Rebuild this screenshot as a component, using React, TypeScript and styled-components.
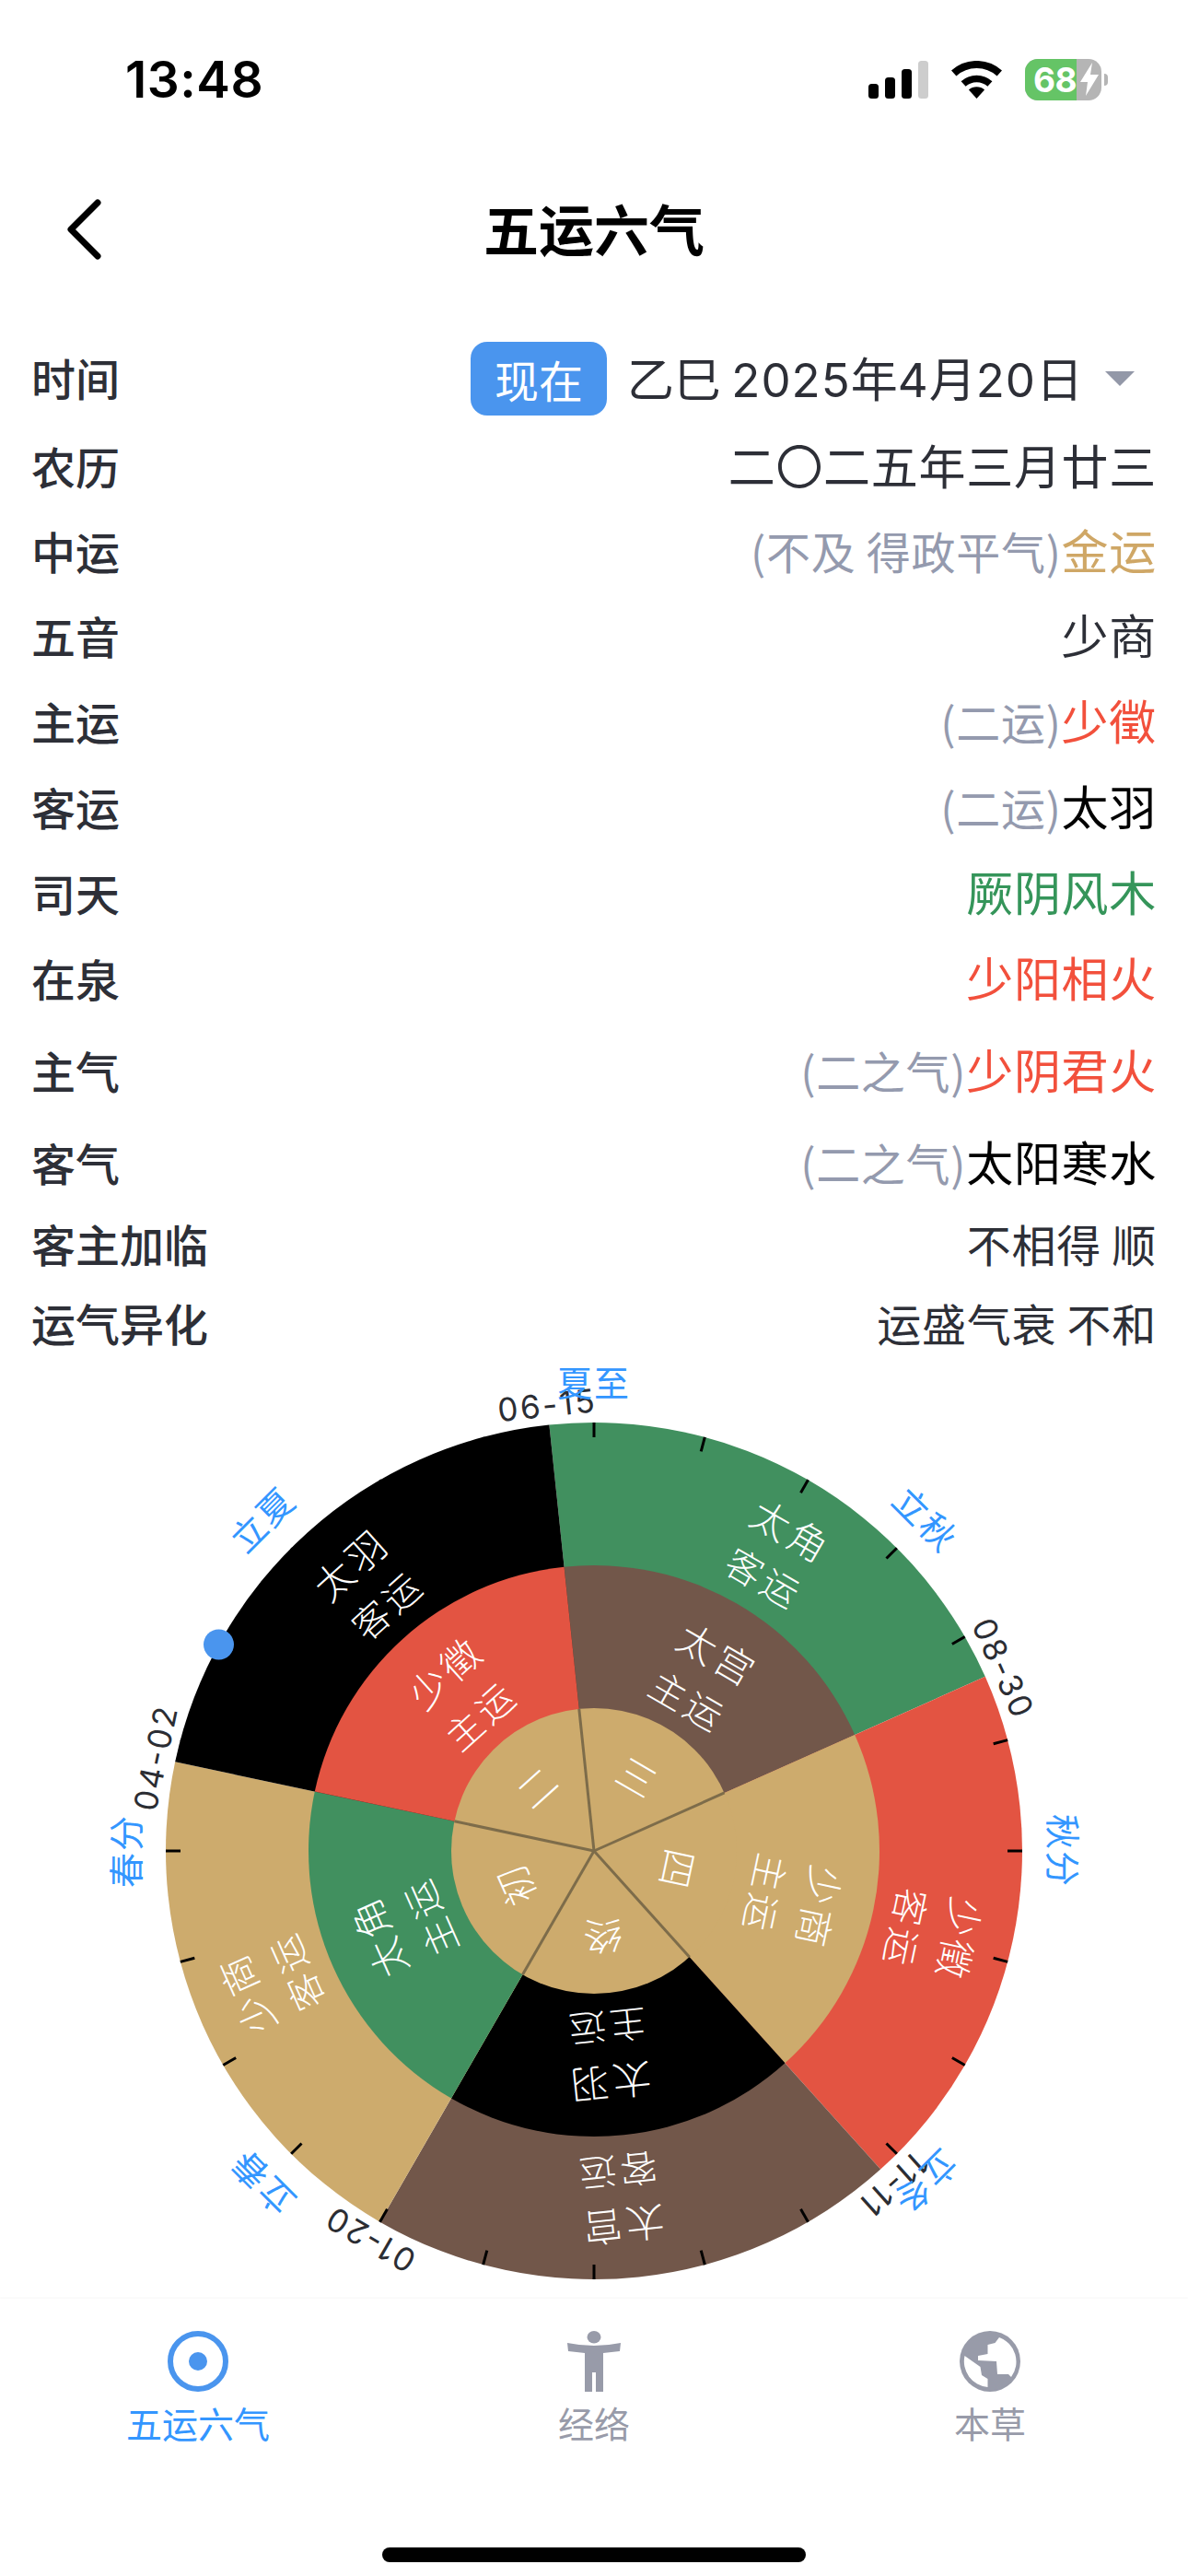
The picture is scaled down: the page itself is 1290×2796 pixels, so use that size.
import React from "react";
import styled, { createGlobalStyle } from "styled-components";

const CJK = `"Noto Sans CJK SC", "Noto Sans", sans-serif`;

const Global = createGlobalStyle`
  html, body { margin: 0; padding: 0; background: #fff; }
  body { font-family: ${CJK}; }
`;

const Page = styled.div`
  width: 1290px;
  height: 2796px;
  background: #fff;
  display: flex;
  flex-direction: column;
  overflow: hidden;
`;

const StatusBar = styled.div`
  height: 172px;
  flex: none;
  display: flex;
  align-items: center;
  justify-content: space-between;
  padding: 0 87px 0 136px;
  box-sizing: border-box;
`;
const Clock = styled.div`
  font: 600 55px/1 Inter, "Liberation Sans", sans-serif;
  letter-spacing: 0.5px;
  color: #000;
`;
const StatusIcons = styled.div`
  display: flex;
  align-items: center;
  gap: 25px;
`;
const Signal = styled.div`
  display: flex;
  align-items: flex-end;
  gap: 7px;
  height: 41px;
`;
const SignalBar = styled.div<{ $h: number; $off?: boolean }>`
  width: 11px;
  height: ${(p) => p.$h}px;
  border-radius: 3.5px;
  background: ${(p) => (p.$off ? "#cdcdcd" : "#000")};
`;
const Battery = styled.div`
  display: flex;
  align-items: center;
  gap: 3px;
`;
const BatteryBody = styled.div`
  width: 83px;
  height: 45px;
  border-radius: 14px;
  overflow: hidden;
  display: flex;
  background: #b5b5b5;
`;
const BatteryFill = styled.div`
  width: 56px;
  background: #65c466;
  color: #fff;
  font: 700 37px/45px Inter, "Liberation Sans", sans-serif;
  text-align: right;
  letter-spacing: -0.5px;
  box-sizing: border-box;
`;
const BatteryBolt = styled.div`
  flex: 1;
  display: flex;
  align-items: center;
  justify-content: center;
`;
const BatteryNub = styled.div`
  width: 4px;
  height: 13px;
  border-radius: 0 4px 4px 0;
  background: #b5b5b5;
`;

const Header = styled.div`
  height: 156px;
  flex: none;
  position: relative;
  display: flex;
  align-items: center;
  justify-content: center;
  padding-bottom: 6px;
  box-sizing: border-box;
`;
const BackButton = styled.svg`
  position: absolute;
  left: 70px;
  top: 42px;
`;
const Title = styled.h1`
  margin: 0;
  font: 700 60px/1 ${CJK};
  color: #000;
`;

const InfoList = styled.div`
  flex: none;
  padding: 31px 34px 0;
  display: flex;
  flex-direction: column;
`;
const Row = styled.div<{ $h: number }>`
  height: ${(p) => p.$h}px;
  display: flex;
  align-items: center;
  justify-content: space-between;
`;
const Label = styled.span`
  font: 500 48px/1 ${CJK};
  color: #2d2f37;
`;
const Value = styled.span<{ $small?: boolean }>`
  font: 400 ${(p) => (p.$small ? 48 : 51)}px/1 ${CJK};
  letter-spacing: 0.7px;
  color: #2d2f37;
  display: inline-flex;
  align-items: baseline;
  white-space: pre;
`;
const Note = styled.span`
  font-size: 48px;
  color: #949aae;
`;
const Accent = styled.span<{ $c: string }>`
  color: ${(p) => p.$c};
`;
const DatePicker = styled.div`
  display: flex;
  align-items: center;
  margin-top: 4px;
`;
const NowTag = styled.span`
  width: 148px;
  height: 80px;
  border-radius: 18px;
  background: #4a95ee;
  color: #fff;
  font: 400 48px/80px ${CJK};
  text-align: center;
`;
const DateText = styled.span`
  margin-left: 22px;
  font: 400 51px/1 ${CJK};
  color: #2d2f37;
`;
const Digits = styled.span`
  font-family: Inter, sans-serif;
  letter-spacing: 1px;
`;
const Caret = styled.div`
  margin-left: 24px;
  margin-right: 24px;
  width: 0;
  height: 0;
  border-left: 16px solid transparent;
  border-right: 16px solid transparent;
  border-top: 16px solid #9398a8;
`;

const ChartSection = styled.div`
  flex: 1;
  min-height: 0;
  margin-top: -9px;
  overflow: hidden;
`;
const ChartSvg = styled.svg`
  display: block;
`;
const SegmentText = styled.text<{ $size: number }>`
  font-family: ${CJK};
  font-size: ${(p) => p.$size}px;
  font-weight: 300;
  letter-spacing: 4px;
  fill: #fff;
  text-anchor: middle;
  dominant-baseline: central;
`;
const DateLabel = styled.text`
  font-family: Inter, sans-serif;
  font-size: 35px;
  font-weight: 400;
  letter-spacing: 2.5px;
  fill: #2b2d33;
  text-anchor: middle;
  dominant-baseline: central;
`;
const TermLabel = styled.text`
  font-family: ${CJK};
  font-size: 38px;
  letter-spacing: 2px;
  font-weight: 400;
  fill: #3396ff;
  text-anchor: middle;
  dominant-baseline: central;
`;

const TabArea = styled.div`
  height: 301px;
  flex: none;
  box-shadow: 0 -1px 2px rgba(0, 0, 0, 0.04);
  background: #fff;
  display: flex;
  flex-direction: column;
  align-items: center;
`;
const TabBar = styled.div`
  width: 100%;
  display: grid;
  grid-template-columns: repeat(3, 430px);
  padding-top: 35px;
`;
const Tab = styled.div<{ $active?: boolean }>`
  display: flex;
  flex-direction: column;
  align-items: center;
  gap: 10px;
  color: ${(p) => (p.$active ? "#3396ff" : "#989ba9")};
  font: 400 39px/46px ${CJK};
`;
const HomeIndicator = styled.div`
  width: 460px;
  height: 16px;
  margin-top: 113px;
  border-radius: 8px;
  background: #000;
`;

const CX = 645;
const CY = 539;
const R1 = 155;
const R2 = 310;
const R3 = 465;

const TAN = "#cdab6d";
const GREEN = "#41905f";
const RED = "#e35442";
const BROWN = "#72574a";
const BLACK = "#000";

const polar = (deg: number, r: number): [number, number] => {
  const a = (deg * Math.PI) / 180;
  return [CX + r * Math.sin(a), CY - r * Math.cos(a)];
};
const sector = (a0: number, a1: number, r0: number, r1: number) => {
  const [x0, y0] = polar(a0, r1);
  const [x1, y1] = polar(a1, r1);
  const [x2, y2] = polar(a1, r0);
  const [x3, y3] = polar(a0, r0);
  return `M${x0} ${y0}A${r1} ${r1} 0 0 1 ${x1} ${y1}L${x2} ${y2}${
    r0 > 0 ? `A${r0} ${r0} 0 0 0 ${x3} ${y3}` : ""
  }Z`;
};

const STARTS = [-6, 66, 138, 210, 282];
const SEGMENTS = [
  { inner: "三", mid: "太宫", midC: BROWN, outer: "太角", outerC: GREEN },
  { inner: "四", mid: "少商", midC: TAN, outer: "少徵", outerC: RED },
  { inner: "终", mid: "太羽", midC: BLACK, outer: "太宫", outerC: BROWN },
  { inner: "初", mid: "太角", midC: GREEN, outer: "少商", outerC: TAN },
  { inner: "二", mid: "少徵", midC: RED, outer: "太羽", outerC: BLACK },
];
const DATES = ["06-15", "08-30", "11-11", "01-20", "04-02"];
const TERMS: [string, number][] = [
  ["夏至", 0],
  ["立秋", 45],
  ["秋分", 90],
  ["立冬", 135],
  ["立春", 225],
  ["春分", 270],
  ["立夏", 315],
];

const Chart = () => (
  <ChartSvg width={1290} height={1025} viewBox="0 0 1290 1025">
    {SEGMENTS.map((s, i) => (
      <g key={i}>
        <path d={sector(STARTS[i], STARTS[i] + 72, 0, R3)} fill={s.outerC} />
        <path d={sector(STARTS[i], STARTS[i] + 72, 0, R2)} fill={s.midC} />
      </g>
    ))}
    <circle cx={CX} cy={CY} r={R1} fill={TAN} />
    {STARTS.map((a) => {
      const [x, y] = polar(a, R1);
      return <line key={a} x1={CX} y1={CY} x2={x} y2={y} stroke="#7d6c4a" strokeWidth={3} />;
    })}
    {Array.from({ length: 24 }, (_, i) => {
      const [x0, y0] = polar(i * 15, R3);
      const [x1, y1] = polar(i * 15, R3 - 16);
      return <line key={i} x1={x0} y1={y0} x2={x1} y2={y1} stroke="#000" strokeWidth={3} />;
    })}
    {SEGMENTS.map((s, i) => {
      const a = STARTS[i] + 36;
      const rot = `rotate(${a} ${CX} ${CY})`;
      return (
        <g key={i} transform={rot}>
          <SegmentText $size={42} x={CX + 12} y={CY - 410}>{s.outer}</SegmentText>
          <SegmentText $size={40} x={CX + 12} y={CY - 350}>客运</SegmentText>
          <SegmentText $size={42} x={CX + 10} y={CY - 254}>{s.mid}</SegmentText>
          <SegmentText $size={40} x={CX + 7} y={CY - 193}>主运</SegmentText>
          <SegmentText $size={42} x={CX + 2} y={CY - 95}>{s.inner}</SegmentText>
        </g>
      );
    })}
    {DATES.map((d, i) => (
      <DateLabel key={d} x={CX} y={CY - 487} transform={`rotate(${STARTS[i]} ${CX} ${CY})`}>
        {d}
      </DateLabel>
    ))}
    {TERMS.map(([t, a]) => (
      <TermLabel key={t} x={CX} y={CY - 511} transform={`rotate(${a} ${CX} ${CY})`}>
        {t}
      </TermLabel>
    ))}
    <circle cx={237.5} cy={CY - 224} r={16.5} fill="#4a95ee" />
  </ChartSvg>
);

const App = () => (
  <Page>
    <Global />
    <StatusBar>
      <Clock>13:48</Clock>
      <StatusIcons>
        <Signal>
          <SignalBar $h={16} />
          <SignalBar $h={23} />
          <SignalBar $h={32} />
          <SignalBar $h={41} $off />
        </Signal>
        <svg width={55} height={41} viewBox="0 0 55 41">
          <g fill="none" stroke="#000">
            <path d="M2.7 13.5A37 37 0 0 1 52.3 13.5" strokeWidth={8} />
            <path d="M13.1 25A21.5 21.5 0 0 1 41.9 25" strokeWidth={7.5} />
          </g>
          <path d="M27.5 41L18.9 31.5A12.8 12.8 0 0 1 36.1 31.5Z" fill="#000" />
        </svg>
        <Battery>
          <BatteryBody>
            <BatteryFill>68</BatteryFill>
            <BatteryBolt>
              <svg width={20} height={36} viewBox="0 0 20 36">
                <path d="M13 0L0 21H8L6 36L20 13H11Z" fill="#fff" />
              </svg>
            </BatteryBolt>
          </BatteryBody>
          <BatteryNub />
        </Battery>
      </StatusIcons>
    </StatusBar>
    <Header>
      <BackButton width={44} height={70} viewBox="0 0 44 70">
        <path
          d="M36 6L7 35L36 64"
          fill="none"
          stroke="#000"
          strokeWidth={7}
          strokeLinecap="round"
          strokeLinejoin="round"
        />
      </BackButton>
      <Title>五运六气</Title>
    </Header>
    <InfoList>
      <Row $h={99}>
        <Label>时间</Label>
        <DatePicker>
          <NowTag>现在</NowTag>
          <DateText>
            乙巳 <Digits>2025</Digits>年<Digits>4</Digits>月<Digits>20</Digits>日
          </DateText>
          <Caret />
        </DatePicker>
      </Row>
      <Row $h={93}>
        <Label>农历</Label>
        <Value>二〇二五年三月廿三</Value>
      </Row>
      <Row $h={91}>
        <Label>中运</Label>
        <Value>
          <Note>(不及 得政平气)</Note>
          <Accent $c="#cfa766">金运</Accent>
        </Value>
      </Row>
      <Row $h={93}>
        <Label>五音</Label>
        <Value>少商</Value>
      </Row>
      <Row $h={93}>
        <Label>主运</Label>
        <Value>
          <Note>(二运)</Note>
          <Accent $c="#f2503c">少徵</Accent>
        </Value>
      </Row>
      <Row $h={93}>
        <Label>客运</Label>
        <Value>
          <Note>(二运)</Note>
          <Accent $c="#000">太羽</Accent>
        </Value>
      </Row>
      <Row $h={93}>
        <Label>司天</Label>
        <Value>
          <Accent $c="#35955a">厥阴风木</Accent>
        </Value>
      </Row>
      <Row $h={93}>
        <Label>在泉</Label>
        <Value>
          <Accent $c="#f2503c">少阳相火</Accent>
        </Value>
      </Row>
      <Row $h={107}>
        <Label>主气</Label>
        <Value>
          <Note>(二之气)</Note>
          <Accent $c="#f2503c">少阴君火</Accent>
        </Value>
      </Row>
      <Row $h={93}>
        <Label>客气</Label>
        <Value>
          <Note>(二之气)</Note>
          <Accent $c="#000">太阳寒水</Accent>
        </Value>
      </Row>
      <Row $h={84}>
        <Label>客主加临</Label>
        <Value $small>不相得 顺</Value>
      </Row>
      <Row $h={88}>
        <Label>运气异化</Label>
        <Value $small>运盛气衰 不和</Value>
      </Row>
    </InfoList>
    <ChartSection>
      <Chart />
    </ChartSection>
    <TabArea>
      <TabBar>
        <Tab $active>
          <svg width={66} height={66} viewBox="0 0 66 66">
            <circle cx={33} cy={33} r={30} fill="none" stroke="#4a95ee" strokeWidth={6} />
            <circle cx={33} cy={33} r={10} fill="#4a95ee" />
          </svg>
          五运六气
        </Tab>
        <Tab>
          <svg width={60} height={66} viewBox="0 0 60 66">
            <ellipse cx={30} cy={6.8} rx={7.5} ry={6.8} fill="#989ba9" />
            <path
              d="M1 13Q30 19 59 13L58 22L40 24V66H32V45H28V66H20V24L2 22Z"
              fill="#989ba9"
            />
          </svg>
          经络
        </Tab>
        <Tab>
          <svg width={66} height={66} viewBox="0 0 66 66">
            <circle cx={33} cy={33} r={33} fill="#989ba9" />
            <path
              d="M43 7L38.5 13L30.5 15V25L20 27V32L40 33L41 47H53L56 50A28 28 0 0 0 43 7Z"
              fill="#fff"
            />
            <path d="M5.5 27L22.5 39L24 48L30.5 52V61A28 28 0 0 1 5.5 27Z" fill="#fff" />
          </svg>
          本草
        </Tab>
      </TabBar>
      <HomeIndicator />
    </TabArea>
  </Page>
);

export default App;
